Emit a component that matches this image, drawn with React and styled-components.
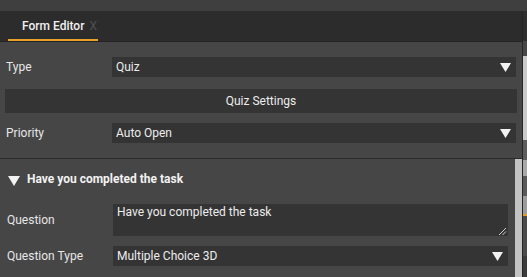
import React from 'react';
import styled, { createGlobalStyle } from 'styled-components';

const GlobalStyle = createGlobalStyle`
  html, body {
    margin: 0;
    padding: 0;
    background: #3f3f3f;
    font-family: Roboto, "Liberation Sans", sans-serif;
    font-size: 12px;
    color: #e6e6e6;
  }
  * { box-sizing: border-box; }
`;

const Arrow = ({ className }) => (
  <svg className={className} width="11" height="9" viewBox="0 0 11 9">
    <path d="M0 0 L11 0 L5.5 9 Z" fill="#f2f2f2" />
  </svg>
);

const Grip = () => (
  <svg width="9" height="9" viewBox="0 0 9 9">
    <path d="M1 8 L8 1 M4.5 8 L8 4.5" stroke="#cfcfcf" strokeWidth="1" />
  </svg>
);

const SelectField = ({ value }) => (
  <Field>
    <FieldText>{value}</FieldText>
    <Arrow />
  </Field>
);

const App = () => {
  return (
    <React.Fragment>
      <GlobalStyle />
      <Page>
        <TopStrip />
        <Body>
          <Main>
            <TabBar>
              <Tab>
                <TabLabel>Form Editor</TabLabel>
                <TabClose>X</TabClose>
              </Tab>
            </TabBar>
            <Panel>
              <Settings>
                <Row>
                  <Label>Type</Label>
                  <SelectField value="Quiz" />
                </Row>
                <SettingsButton>Quiz Settings</SettingsButton>
                <Row>
                  <Label>Priority</Label>
                  <SelectField value="Auto Open" />
                </Row>
              </Settings>
              <Questions>
                <QuestionList>
                  <SectionHeader>
                    <HeaderArrow viewBox="0 0 12 10" width="12" height="10">
                      <path d="M0 0 L12 0 L6 10 Z" fill="#f2f2f2" />
                    </HeaderArrow>
                    <HeaderTitle>Have you completed the task</HeaderTitle>
                  </SectionHeader>
                  <QuestionRow>
                    <QuestionLabel>Question</QuestionLabel>
                    <TextArea>
                      Have you completed the task
                      <GripCorner>
                        <Grip />
                      </GripCorner>
                    </TextArea>
                  </QuestionRow>
                  <QuestionRow $gap={10}>
                    <QuestionLabel>Question Type</QuestionLabel>
                    <SelectField value="Multiple Choice 3D" />
                  </QuestionRow>
                </QuestionList>
                <ScrollTrack>
                  <ScrollThumb />
                </ScrollTrack>
              </Questions>
            </Panel>
          </Main>
          <Divider />
          <SidePanel>
            <SideBlock $h={30} $bg="#2e2e2e" />
            <SideBlock $h={15} $bg="#464646" />
            <SideBlock $h={84} $bg="#cacaca" />
            <SideBlock $h={20} $bg="#5c5c5c" />
            <SideBlock $h={16} $bg="#a9a9a9" />
            <SideBlock $h={20} $bg="#595959" />
            <SideBlock $h={18} $bg="#9c9c9c" />
            <SideBlock $h={2} $bg="#e0a030" />
            <SideBlock $h={40} $bg="#4a4a4a" />
          </SidePanel>
        </Body>
      </Page>
    </React.Fragment>
  );
};

const Page = styled.div`
  width: 527px;
  height: 277px;
  overflow: hidden;
  display: flex;
  flex-direction: column;
`;

const TopStrip = styled.div`
  height: 11px;
  flex-shrink: 0;
  background: #3f3f3f;
`;

const Body = styled.div`
  flex: 1;
  display: flex;
  min-height: 0;
`;

const Main = styled.div`
  width: 522px;
  display: flex;
  flex-direction: column;
`;

const Divider = styled.div`
  width: 1px;
  background: #262626;
`;

const SidePanel = styled.div`
  width: 4px;
  display: flex;
  flex-direction: column;
  background: #3a3a3a;
`;

const SideBlock = styled.div`
  height: ${(p) => p.$h}px;
  flex-shrink: 0;
  background: ${(p) => p.$bg};
`;

const TabBar = styled.div`
  height: 31px;
  flex-shrink: 0;
  display: flex;
  align-items: stretch;
  padding-left: 8px;
  background: #2c2c2c;
  border-bottom: 1px solid #232323;
`;

const Tab = styled.div`
  width: 90px;
  display: flex;
  align-items: center;
  padding-left: 14px;
  padding-top: 1px;
  border-bottom: 2px solid #e8a22c;
`;

const TabLabel = styled.span`
  font-weight: 500;
  color: #f0f0f0;
`;

const TabClose = styled.span`
  margin-left: 5px;
  font-size: 12px;
  color: #505050;
`;

const Panel = styled.div`
  flex: 1;
  display: flex;
  flex-direction: column;
  background: #464646;
  min-height: 0;
`;

const Settings = styled.div`
  display: flex;
  flex-direction: column;
  padding: 15px 6px 15px 5px;
  border-bottom: 1px solid #2b2b2b;
`;

const Row = styled.div`
  display: flex;
  align-items: center;
`;

const Label = styled.div`
  width: 107px;
  flex-shrink: 0;
  padding-left: 1px;
`;

const Field = styled.div`
  flex: 1;
  height: 20px;
  display: flex;
  align-items: center;
  justify-content: space-between;
  padding: 0 5px 0 4px;
  background: #343434;
  color: #ececec;
`;

const FieldText = styled.span``;

const SettingsButton = styled.div`
  height: 24px;
  margin: 12px -1px 10px 0;
  display: flex;
  align-items: center;
  justify-content: center;
  background: #343434;
  color: #ececec;
`;

const Questions = styled.div`
  flex: 1;
  display: flex;
  min-height: 0;
`;

const QuestionList = styled.div`
  flex: 1;
  display: flex;
  flex-direction: column;
  padding: 10px 7px 0 6px;
`;

const SectionHeader = styled.div`
  height: 20px;
  display: flex;
  align-items: center;
  padding-left: 2px;
`;

const HeaderArrow = styled.svg`
  margin-top: 4px;
  margin-right: 7px;
`;

const HeaderTitle = styled.span`
  font-weight: 700;
  color: #f2f2f2;
`;

const QuestionRow = styled.div`
  display: flex;
  align-items: center;
  margin-top: ${(p) => p.$gap ?? 15}px;
`;

const QuestionLabel = styled.div`
  width: 107px;
  flex-shrink: 0;
  padding-left: 1px;
`;

const TextArea = styled.div`
  position: relative;
  flex: 1;
  height: 32px;
  padding: 1px 4px;
  line-height: 14px;
  background: #343434;
  color: #ececec;
`;

const GripCorner = styled.div`
  position: absolute;
  right: 1px;
  bottom: 0;
  display: flex;
`;

const ScrollTrack = styled.div`
  width: 7px;
  flex-shrink: 0;
  display: flex;
  background: #464646;
`;

const ScrollThumb = styled.div`
  flex: 1;
  background: #c3c3c3;
`;

export default App;
